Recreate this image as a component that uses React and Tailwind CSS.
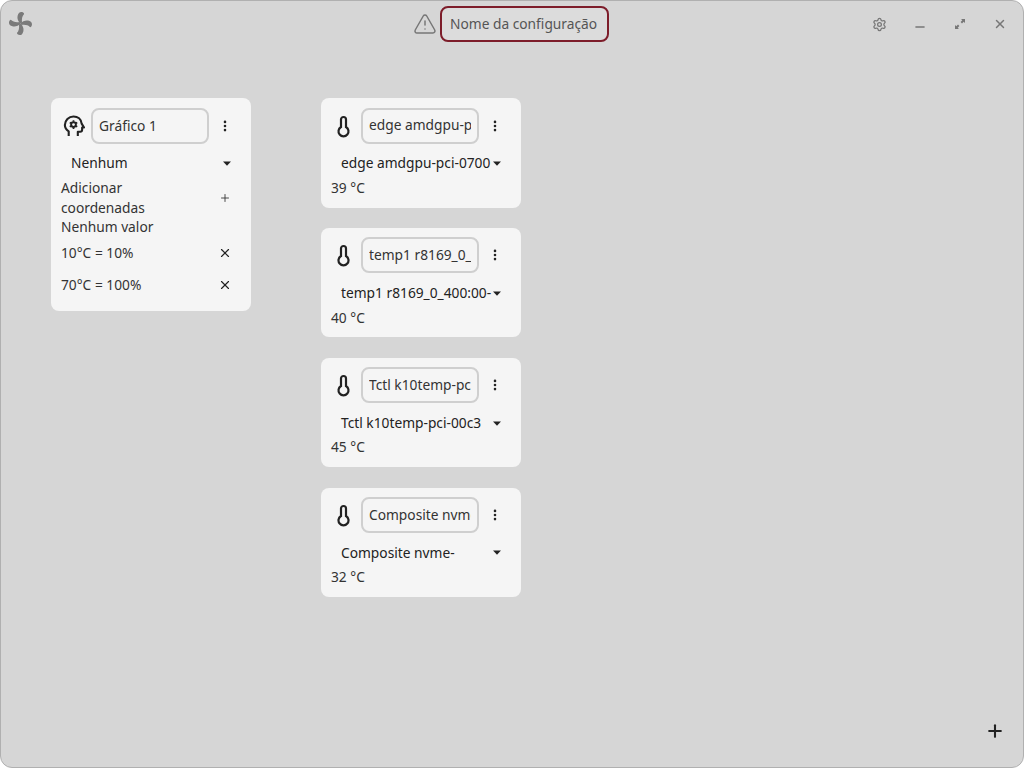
import { Plus, X, Settings, Minus, TriangleAlert, EllipsisVertical } from 'lucide-react';

const blade = 'M12 12C9 9.500 8 5 10.500 1.800 12 .4 15 .8 15.500 2.800 13.500 4.500 13 8 13.500 11Z';

const FanLogo = () => (
  <svg width="25" height="25" viewBox="0 0 24 24" fill="#7a7a7a" className="mt-[-1px]">
    <path d={blade} />
    <path d={blade} transform="rotate(90 12 12)" />
    <path d={blade} transform="rotate(180 12 12)" />
    <path d={blade} transform="rotate(270 12 12)" />
  </svg>
);

const HeadGear = () => (
  <svg width="23" height="23" viewBox="0 0 24 24" fill="none" stroke="#222" strokeWidth="2.2" strokeLinejoin="round" className="ml-[2px]">
    <path d="M7 22V17C4.500 15.500 3 13 3 10.500A9 9 0 0 1 12 1.500C16.500 1.500 20 4.500 20.500 9L23 13H21V15.500A2 2 0 0 1 19 17.500H16.500V22" />
    <circle cx="12" cy="10" r="2.500" strokeWidth="2" />
    <path d="M12 5.500v1.500M12 13v1.500M8.100 7.800l1.300.7M14.600 11.500l1.300.7M8.100 12.200l1.300-.7M14.600 8.500l1.300-.7" strokeWidth="1.800" />
  </svg>
);

const ThermometerIcon = () => (
  <svg width="24" height="24" viewBox="0 0 24 24" fill="none" stroke="#222" strokeWidth="2.2" className="w-[30px] shrink-0 pr-[6px]">
    <path d="M10 5.500a2.500 2.500 0 0 1 5 0V13a5 5 0 1 1-5 0Z" />
  </svg>
);

const Dropdown = ({ label }) => (
  <div className="flex items-center h-[30px] pl-[10px] pr-[10px]">
    <span className="flex-1 min-w-0 whitespace-nowrap text-[#222]">{label}</span>
    <svg width="8" height="5" viewBox="0 0 8 5" className="shrink-0"><path d="M0 .5h8L4 4.800z" fill="#222" /></svg>
  </div>
);

const NameInput = ({ value }) => (
  <input
    readOnly
    value={value}
    className="w-[118px] h-[36px] pb-[2px] rounded-[8px] border-2 border-[#cfcfcf] px-[6px] text-[#333] outline-none"
  />
);

const Menu = () => <EllipsisVertical size={14} strokeWidth={2.5} color="#222" className="mx-[9px]" />;

// fractional offsets: the reference cards sit on sub-pixel rows
const TempCard = ({ name, sensor, value }) => (
  <div className="w-[200px] h-[109.6px] bg-[#f5f5f5] rounded-[8px] pt-[9.55px] px-[10px]">
    <div className="flex items-center h-[36px]">
      <ThermometerIcon />
      <NameInput value={name} />
      <Menu />
    </div>
    <div className="mt-[4.75px] -mb-[0.7px]"><Dropdown label={sensor} /></div>
    <div className="text-[#333] leading-[20px]">{value}</div>
  </div>
);

const sensors = [
  { name: 'edge amdgpu-pci-0700', sensor: 'edge amdgpu-pci-0700', value: '39 °C' },
  { name: 'temp1 r8169_0_400:00', sensor: 'temp1 r8169_0_400:00-', value: '40 °C' },
  { name: 'Tctl k10temp-pci-00c3', sensor: 'Tctl k10temp-pci-00c3', value: '45 °C' },
  { name: 'Composite nvme-pci', sensor: 'Composite nvme-', value: '32 °C' },
];

export default function App() {
  return (
    <div className="relative w-[1024px] h-[768px] bg-[#d6d6d6] rounded-[12px] border border-[#b0b0b0] overflow-hidden text-[13.75px] font-['Noto_Sans',sans-serif]">
      <header className="flex items-center h-[46px] pl-[7px] pr-[4px]">
        <FanLogo />
        <div className="flex items-center gap-[3px] ml-[380px]">
          <TriangleAlert size={24} strokeWidth={1.5} color="#777" />
          <div className="h-[36px] w-[169px] pt-[1px] px-[8px] flex items-center rounded-[8px] border-2 border-[#7d1d2a] bg-[#dcdcdc] text-[#555] whitespace-nowrap">
            Nome da configuração
          </div>
        </div>
        <div className="flex items-center ml-auto">
          <div className="w-[40px] flex justify-center"><Settings size={15} strokeWidth={2} color="#777" /></div>
          <div className="w-[40px] flex justify-center pl-[1px]"><Minus size={14} strokeWidth={2.500} color="#777" className="mt-[5px]" /></div>
          <div className="w-[40px] flex justify-center pl-[1px]">
            <svg width="12" height="12" viewBox="0 0 12 12" fill="#777"><path d="M7 1h4v4L9.700 3.700 8 5.400 6.600 4 8.300 2.300zM5 11H1V7l1.300 1.300L4 6.600 5.400 8 3.700 9.700z" /></svg>
          </div>
          <div className="w-[40px] flex justify-center pl-[1px]"><X size={14} strokeWidth={2.500} color="#777" /></div>
        </div>
      </header>

      <main className="flex items-start gap-[70px] pl-[50px] pt-[51px]">
        <div className="w-[200px] h-[213px] bg-[#f5f5f5] rounded-[8px] pt-[10px] px-[10px] text-[#333]">
          <div className="flex items-center h-[36px]">
            <div className="w-[30px] shrink-0 -ml-[1px] mr-[1px]"><HeadGear /></div>
            <NameInput value="Gráfico 1" />
            <Menu />
          </div>
          <div className="mt-[4px]"><Dropdown label="Nenhum" /></div>
          <div className="flex items-center leading-[19.500px]">
            <span className="flex-1">Adicionar<br />coordenadas</span>
            <Plus size={12} strokeWidth={1.75} color="#333" className="mr-[10px]" />
          </div>
          <div className="leading-[19.500px]">Nenhum valor</div>
          <div className="flex items-center h-[32px] mt-[1px]">
            <span className="flex-1">10°C = 10%</span>
            <X size={14} strokeWidth={2} color="#222" className="mr-[9px] -mt-[1px]" />
          </div>
          <div className="flex items-center h-[32px]">
            <span className="flex-1">70°C = 100%</span>
            <X size={14} strokeWidth={2} color="#222" className="mr-[9px] -mt-[1px]" />
          </div>
        </div>

        <div className="flex flex-col gap-[20.3px]">
          {sensors.map((s) => <TempCard key={s.name} {...s} />)}
        </div>
      </main>

      <Plus size={20} strokeWidth={2.5} color="#222" className="absolute right-[18px] bottom-[26px]" />
    </div>
  );
}
